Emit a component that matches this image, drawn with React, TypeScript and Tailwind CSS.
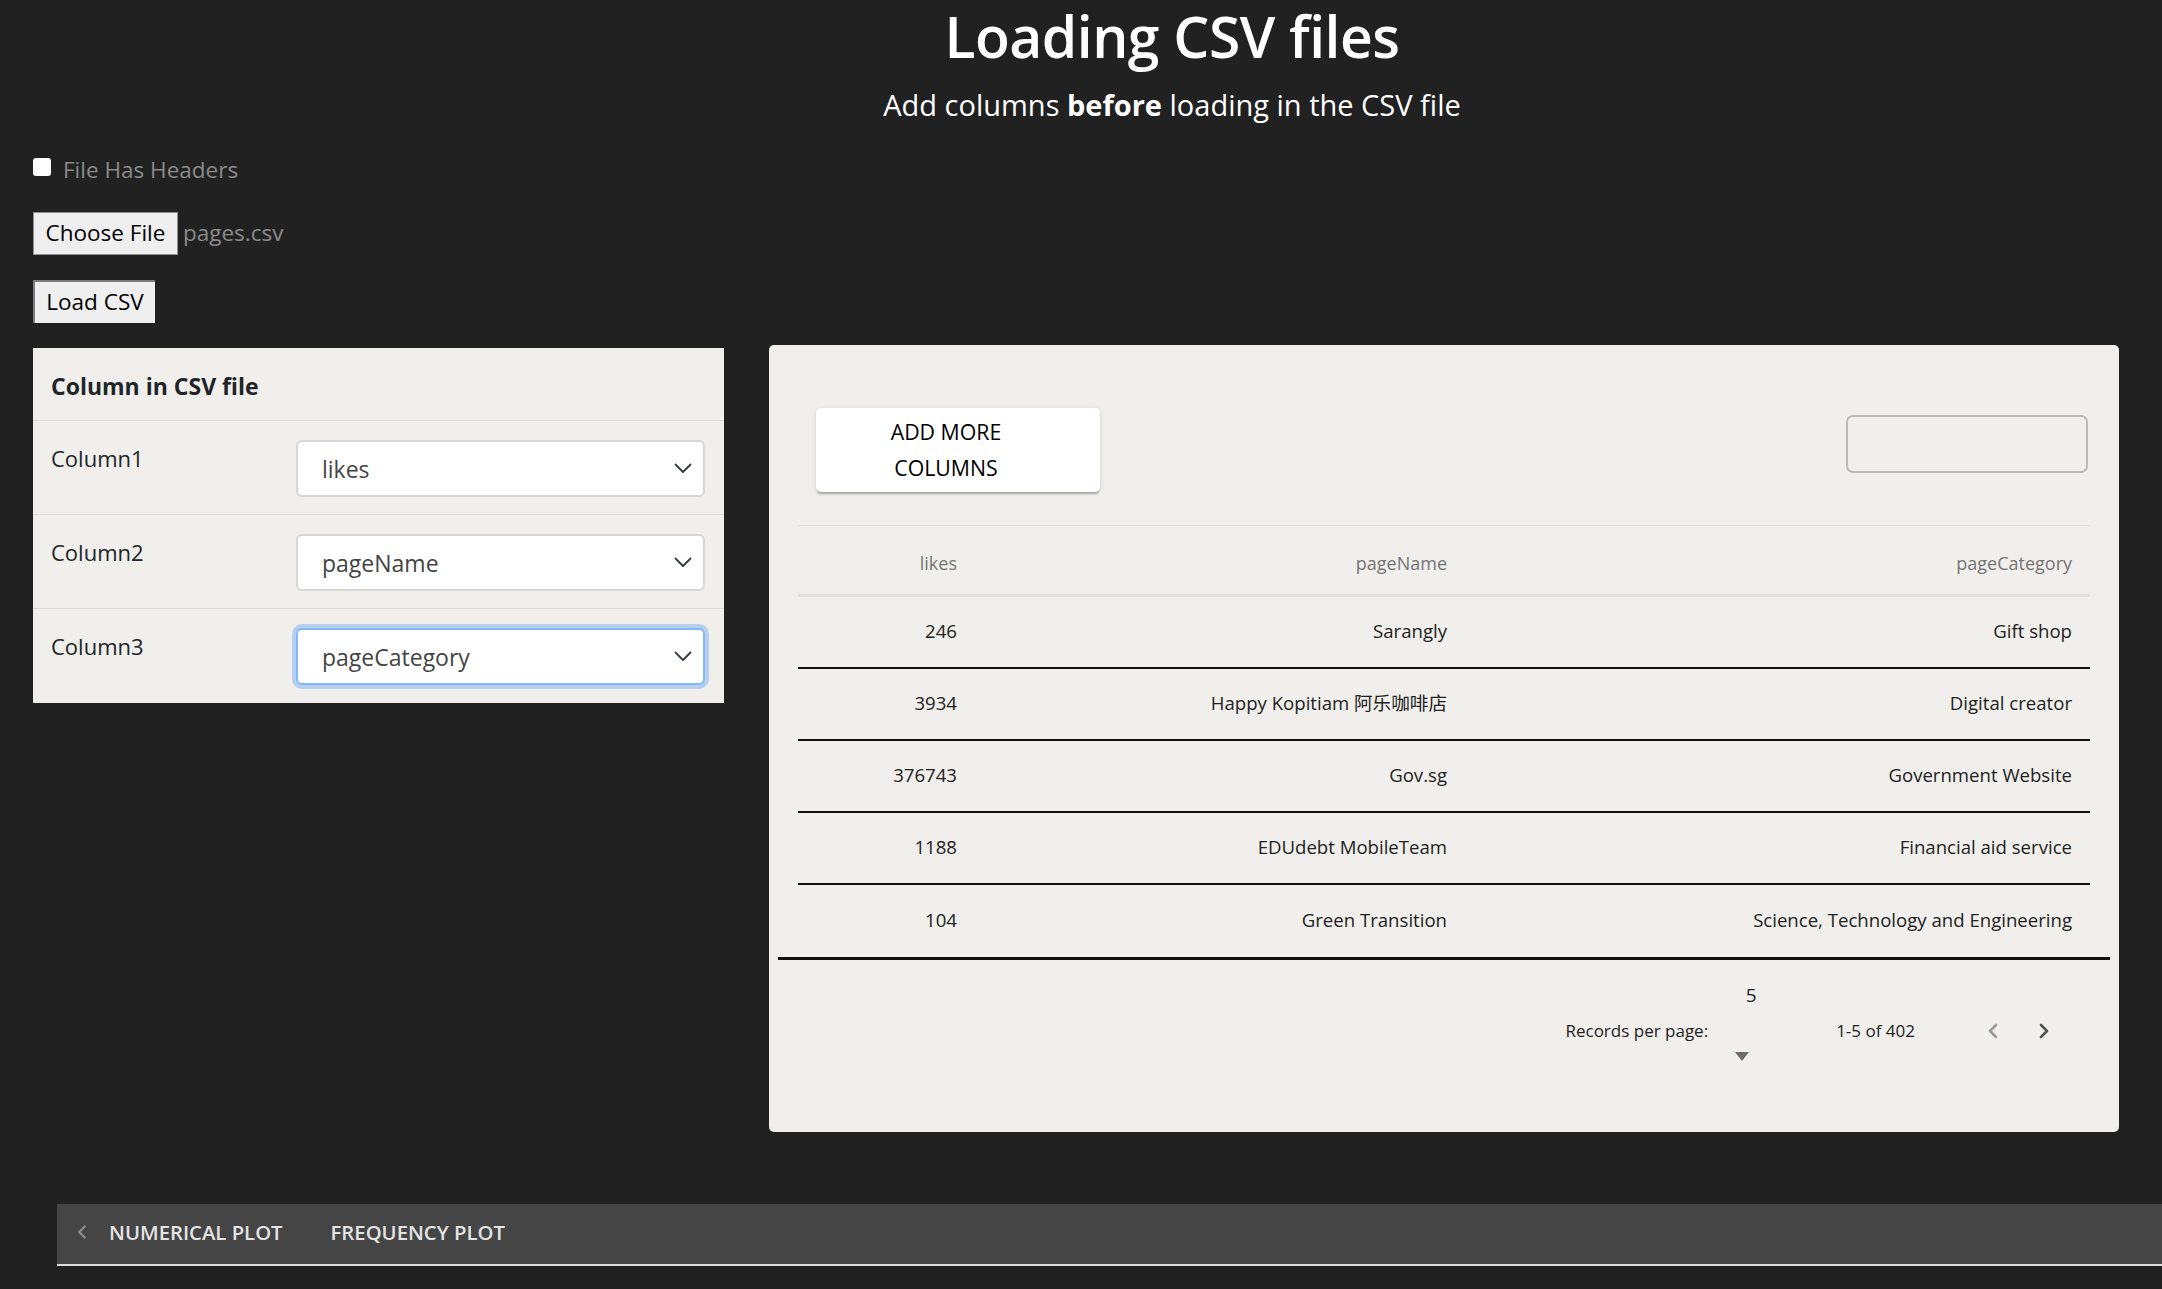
import { ChevronLeft, ChevronRight } from 'lucide-react';

/* ---------------- Data ---------------- */
const mappings = [
  { label: 'Column1', value: 'likes', focused: false },
  { label: 'Column2', value: 'pageName', focused: false },
  { label: 'Column3', value: 'pageCategory', focused: true },
];

const rows = [
  { likes: '246', pageName: 'Sarangly', pageCategory: 'Gift shop' },
  { likes: '3934', pageName: 'Happy Kopitiam 阿乐咖啡店', pageCategory: 'Digital creator' },
  { likes: '376743', pageName: 'Gov.sg', pageCategory: 'Government Website' },
  { likes: '1188', pageName: 'EDUdebt MobileTeam', pageCategory: 'Financial aid service' },
  { likes: '104', pageName: 'Green Transition', pageCategory: 'Science, Technology and Engineering' },
];

const font = "font-['Open_Sans','Noto_Sans_CJK_SC',sans-serif]";

const App = () => {
  return (
    <div className={`min-h-screen bg-[#212121] pb-[23px] ${font}`}>
      {/* Header */}
      <header className="flex flex-col items-center pl-[182px] text-white">
        <h1 className="text-[57px] font-semibold leading-[72px] tracking-[-0.5px]">Loading CSV files</h1>
        <p className="mt-[13px] text-[29px] leading-[40px]">
          Add columns <b className="font-bold">before</b> loading in the CSV file
        </p>
      </header>

      <div className="px-[33px]">
        {/* Options */}
        <label className="mt-[28px] flex items-center gap-[12px] text-[22.5px] text-[#8a8a8a]">
          <input type="checkbox" className="-mt-[5px] h-[18px] w-[18px] appearance-none rounded-[3px] bg-white" />
          File Has Headers
        </label>

        <div className="mt-[25px] flex items-center gap-[5px]">
          <span className="flex h-[43px] w-[145px] items-center justify-center border border-[#8f8f8f] bg-[#efefef] text-[22.5px] text-black">
            Choose File
          </span>
          <span className="text-[22.5px] text-[#8a8a8a]">pages.csv</span>
        </div>

        <button className="mt-[25px] flex h-[43px] w-[122px] items-center justify-center border-l-2 border-t-2 border-[#7c7c7c] bg-[#efefef] text-[22.5px] text-black">
          Load CSV
        </button>

        {/* Panels */}
        <div className="mt-[22px] flex items-start gap-[45px]">
          {/* Column mapping */}
          <div className="mt-[3px] w-[691px] bg-[#f0efeb] text-[#212529]">
            <div className="flex h-[73px] items-center border-b border-[#dcdcd8] px-[18px] pt-[5px] text-[23px] font-bold">
              Column in CSV file
            </div>
            {mappings.map((m, i) => (
              <div
                key={m.label}
                className={`flex h-[94px] items-start px-[18px] pt-[19px] ${i < mappings.length - 1 ? 'border-b border-[#dcdcd8]' : ''}`}
              >
                <span className="w-[245px] pt-[1px] text-[22px] leading-[34px]">{m.label}</span>
                <div
                  className={`flex h-[57px] w-[409px] items-center justify-between rounded-[6px] bg-white pl-[24px] pr-[11px] text-[23px] text-[#444] ${
                    m.focused
                      ? 'border-2 border-[#86b7fe] shadow-[0_0_0_4px_rgba(13,110,253,0.25)]'
                      : 'border-2 border-[#d6d6d6]'
                  }`}
                >
                  <span className="pt-[2px]">{m.value}</span>
                  <svg width="18" height="11" viewBox="0 0 18 11" fill="none">
                    <polyline points="1.5,1.5 9,9 16.5,1.5" stroke="#343a40" strokeWidth="1.8" strokeLinecap="round" strokeLinejoin="round" />
                  </svg>
                </div>
              </div>
            ))}
          </div>

          {/* Data preview */}
          <div className="flex h-[787px] w-[1350px] flex-col rounded-[5px] bg-[#f0efeb] px-[9px]">
            <div className="flex items-start justify-between pl-[38px] pr-[22px] pt-[63px]">
              <button className="flex h-[84px] w-[284px] flex-col items-center justify-center rounded-[5px] bg-white pr-[24px] text-[21.3px] font-medium uppercase leading-[36px] text-black shadow-[0_3px_2px_-1px_rgba(0,0,0,0.25),0_1px_5px_0_rgba(0,0,0,0.12)]">
                <span>Add more</span>
                <span>Columns</span>
              </button>
              <div className="mt-[7px] h-[58px] w-[242px] rounded-[7px] border-2 border-[#bbbab5]" />
            </div>

            <div className="mx-[20px] mt-[33px] border-t border-[#e0e0dc]">
              <div className="grid h-[71px] grid-cols-[177px_490px_1fr] items-center border-b-[3px] border-[#e0e0e0] pt-[8px] text-[18px] text-[#757575]">
                <span className="pr-[18px] text-right">likes</span>
                <span className="pr-[18px] text-right">pageName</span>
                <span className="pr-[18px] text-right">pageCategory</span>
              </div>
              {rows.map((r, i) => (
                <div
                  key={r.likes}
                  className={`grid h-[72px] grid-cols-[177px_490px_1fr] items-center pb-[2px] text-[18.6px] text-[#222] ${
                    i < rows.length - 1 ? 'border-b-2 border-[#111]' : ''
                  }`}
                >
                  <span className="pr-[18px] text-right">{r.likes}</span>
                  <span className="pr-[18px] text-right">{r.pageName}</span>
                  <span className="pr-[18px] text-right">{r.pageCategory}</span>
                </div>
              ))}
            </div>
            <div className="border-t-[3px] border-[#111]" />

            {/* Pagination */}
            <div className="flex items-start justify-end pr-[54px] text-[17px] text-[#222]">
              <span className="mt-[59px] leading-[24px]">Records per page:</span>
              <div className="ml-[13px] mt-[20px] flex w-[60px] flex-col items-center">
                <span className="text-[19px] leading-[30px]">5</span>
                <svg width="14" height="9" viewBox="0 0 14 9" className="mr-[18px] mt-[42px]">
                  <polygon points="0,0 14,0 7,9" fill="#6b6b6b" />
                </svg>
              </div>
              <span className="ml-[55px] mt-[59px] leading-[24px]">1-5 of 402</span>
              <ChevronLeft className="ml-[66px] mt-[59px] h-[24px] w-[24px] text-[#9a9a9a]" strokeWidth={2.6} />
              <ChevronRight className="ml-[27px] mt-[59px] h-[24px] w-[24px] text-[#555]" strokeWidth={2.6} />
            </div>
          </div>
        </div>
      </div>

      {/* Plot tabs */}
      <nav className="ml-[57px] mt-[72px] flex h-[62px] items-center border-b-2 border-[#dcdcdc] bg-[#454545] pb-[4px] pl-[14px] text-[20.3px] font-semibold uppercase text-[#e4e4e4]">
        <ChevronLeft className="h-[22px] w-[22px] text-[#8c8c8c]" strokeWidth={2.6} />
        <span className="ml-[16px]">Numerical plot</span>
        <span className="ml-[48px]">Frequency plot</span>
      </nav>
    </div>
  );
};

export default App;
